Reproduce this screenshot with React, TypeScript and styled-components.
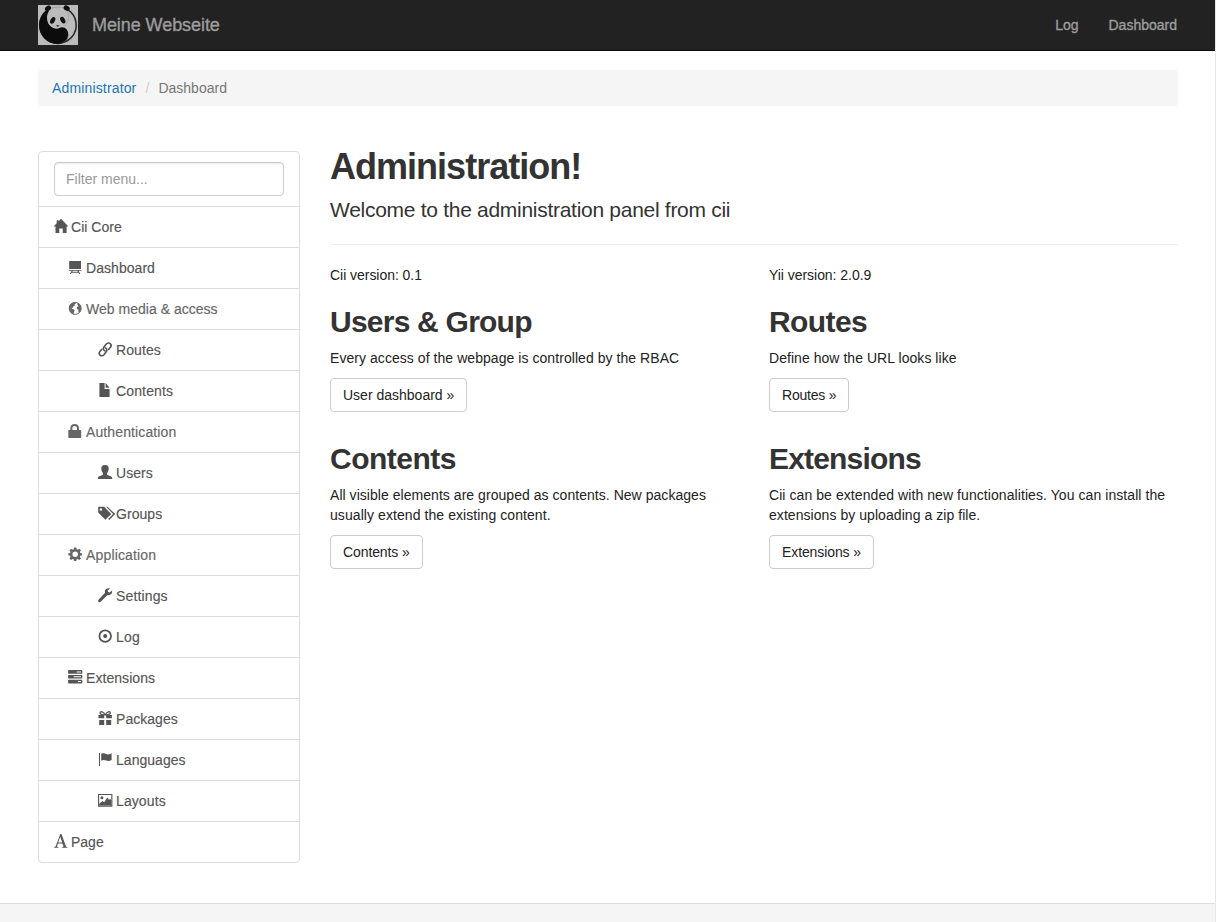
import React from "react";
import styled, { createGlobalStyle } from "styled-components";

const GlobalStyle = createGlobalStyle`
  *, *::before, *::after { box-sizing: border-box; }
  html { background: #e7e7e7; }
  body {
    margin: 0;
    font-family: "Liberation Sans", Arial, sans-serif;
    font-size: 14px;
    line-height: 20px;
    color: #333;
  }
  a { color: inherit; text-decoration: none; }
`;

const Page = styled.div`
  display: flex;
  flex-direction: column;
  width: 1215px;
  height: 922px;
  overflow: hidden;
  background: #fff;
`;

const Navbar = styled.header`
  flex: none;
  height: 51px;
  background: #222;
  border-bottom: 1px solid #080808;
  padding: 0 38px;
  display: flex;
  align-items: center;
  justify-content: space-between;
  color: #9d9d9d;
`;

const Brand = styled.a`
  display: flex;
  align-items: center;
  gap: 14px;
  font-size: 18px;
  -webkit-text-stroke: 0.35px #9d9d9d;
`;

const NavLinks = styled.nav`
  display: flex;
  gap: 30px;
  -webkit-text-stroke: 0.35px #9d9d9d;
`;

const Tracked = styled.span<{ $ls?: number }>`
  letter-spacing: ${(p) => p.$ls ?? 0}px;
  white-space: nowrap;
`;

const Breadcrumb = styled.ol`
  flex: none;
  list-style: none;
  margin: 19px 37px 0 38px;
  padding: 0 14px;
  height: 36px;
  background: #f5f5f5;
  border-radius: 4px;
  display: flex;
  align-items: center;
  color: #777;
`;

const Slash = styled.li`
  width: 22px;
  text-align: center;
  color: #ccc;
`;

const CrumbLink = styled.li`
  color: #1c75b5;
  letter-spacing: 0.15px;
`;

const Body = styled.div`
  flex: 1;
  display: grid;
  grid-template-columns: 262px 848px;
  column-gap: 30px;
  align-items: start;
  padding: 40px 0 0 38px;
`;

const Sidebar = styled.ul`
  list-style: none;
  margin: 5px 0 0;
  padding: 0;
  border: 1px solid #ddd;
  border-radius: 4px;
`;

const FilterRow = styled.li`
  height: 54px;
  padding: 10px 15px;
`;

const FilterInput = styled.input`
  display: block;
  width: 100%;
  height: 34px;
  padding: 0 11px;
  border: 1px solid #ccc;
  border-radius: 4px;
  box-shadow: inset 0 1px 1px rgba(0, 0, 0, 0.075);
  font: inherit;
  background: #fff;
  &::placeholder { color: #999; opacity: 1; }
`;

const MenuRow = styled.li<{ $level: number; $category?: boolean }>`
  height: 41px;
  border-top: 1px solid #ddd;
  padding-left: ${(p) => [15, 29, 59][p.$level]}px;
  display: flex;
  align-items: center;
  gap: ${(p) => (p.$level === 0 ? 3 : 4)}px;
  color: ${(p) => (p.$category ? "#666" : "#555")};
  -webkit-text-stroke: 0.15px currentColor;
`;

const Glyph = styled.svg`
  flex: none;
  width: 14px;
  height: 14px;
  overflow: visible;
  fill: currentColor;
`;

const Main = styled.main`
  display: flex;
  flex-direction: column;
`;

const Title = styled.h1`
  margin: 1px 0 0;
  font-size: 36px;
  line-height: 40px;
  font-weight: 700;
  letter-spacing: -0.98px;
`;

const Lead = styled.p`
  margin: 8px 0 0;
  padding-bottom: 20px;
  font-size: 21px;
  line-height: 29px;
  letter-spacing: -0.285px;
  border-bottom: 1px solid #eee;
`;

const Columns = styled.div`
  display: grid;
  grid-template-columns: 409px 409px;
  column-gap: 30px;
  row-gap: 30px;
  padding-top: 20px;
`;

const Text = styled.p`
  margin: 0 0 10px;
  color: #222;
`;

const Version = styled.p`
  margin: 0;
  color: #222;
  letter-spacing: -0.04px;
`;

const SectionTitle = styled.h2<{ $ls: number }>`
  margin: 0 0 10px;
  font-size: 30px;
  line-height: 33px;
  font-weight: 700;
  letter-spacing: ${(p) => p.$ls}px;
`;

const Button = styled.a<{ $ls: number }>`
  display: inline-flex;
  align-items: center;
  height: 34px;
  padding: 0 12px;
  border: 1px solid #ccc;
  border-radius: 4px;
  color: #222;
  letter-spacing: ${(p) => p.$ls}px;
`;

const Footer = styled.footer`
  flex: none;
  height: 19px;
  background: #f5f5f5;
  border-top: 1px solid #ddd;
`;

const Logo = () => (
  <svg width="40" height="40" viewBox="0 0 40 40">
    <rect width="40" height="40" fill="#bcbcbc" />
    <path d="M30.500 5.200A18.300 18.300 0 1 1 8.500 5.800" fill="none" stroke="#222" strokeWidth="1.500" />
    <path d="M11 4.500C16 1.300 24 1.200 28.500 4.200" fill="none" stroke="#999" strokeWidth="0.800" />
    <path d="M8.500 5.500C4 9 1.200 14 1.400 21 1.900 32 10 39 20 38.700 26 38.300 30 34 30.200 29.500 30.300 25 27.500 22.300 24.500 22.200 21.500 22.200 20.500 24.300 17.200 23.500 12 22.300 9 18 9 13 9 10 9.700 8 11 6Z" fill="#0c0c0c" />
    <path d="M30.200 29C30 33.500 27 37 22 38.400 29.500 37.500 34.500 33.500 36.800 28.500 34 32 31.500 34.500 28.500 35.800 30 33.500 30.500 31.500 30.200 29Z" fill="#333" />
    <ellipse cx="10" cy="3.400" rx="3.200" ry="2.500" transform="rotate(-30 10 3.400)" fill="#111" />
    <ellipse cx="28.700" cy="3.200" rx="3.200" ry="2.500" transform="rotate(30 28.700 3.200)" fill="#111" />
    <path d="M29.500 6C31.500 11 30.500 17 26.500 21" fill="none" stroke="#a0a0a0" strokeWidth="0.800" />
    <ellipse cx="14.700" cy="15.300" rx="2.200" ry="3.600" transform="rotate(30 14.700 15.300)" fill="#111" />
    <ellipse cx="24.800" cy="15.100" rx="2.200" ry="3.600" transform="rotate(-30 24.800 15.100)" fill="#111" />
    <path d="M17.800 20.300Q19.700 19.500 21.600 20.300L19.700 21.900Z" fill="#444" />
  </svg>
);

const icons: Record<string, React.ReactNode> = {
  home: <path d="M7-1.300 14.400 6.500H12.600V13H8.700V8.500H5.300V13H1.500V6.500H-.4L2.700 3.300V.3H4.700V1.200Z" />,
  board: (
    <path d="M1.200 0H13V8H1.200ZM.8 9H13.400V9.700H.8ZM3.700 9.700H4.800L4.300 10.700H9.900L9.400 9.700H10.500L12.400 13H11.200L10.500 11.700H3.700L3 13H1.800Z" />
  ),
  globe: (
    <>
      <circle cx="7.200" cy="6.400" r="6" fill="none" stroke="currentColor" strokeWidth="1" />
      <path d="M1.200 6.500C.8 3 3.500.4 7.200.5L8 1.700 6.600 2.400 6.900 3.600 5.300 4.600 5 5.800 3.600 5.500 3.900 6.800 5.600 7.300 6.600 8.600 5.900 10.300 5.700 12.200C3 11.500 1.300 9.300 1.200 6.500ZM9.400.8C12 1.900 13.300 4 13.200 6.500 13.100 8.400 12.200 10 11 11L10.300 9.200 10.500 7.800 8.800 7 8.900 5 10.600 4.200 9.500 2.900Z" />
    </>
  ),
  link: (
    <g fill="none" stroke="currentColor" strokeWidth="1.600" strokeLinecap="butt">
      <path d="M7.600 8.300C5.400 7.500 4.600 5.600 5.900 4.100L8.300 1.100C9.500-.4 11.300-.2 12.300.7 13.300 1.700 13.400 3.100 12.400 4.300L10.200 6.900" />
      <path d="M6.600 4.500C8.800 5.300 9.600 7.100 8.400 8.600L6 11.700C4.800 13.100 3 13.100 2 12.100 1 11.200.9 9.800 1.900 8.600L4.100 6" />
    </g>
  ),
  file: <path d="M1.400-.9H6.600V4.900H11.600V12.900H1.400ZM7.600-.9 11.600 3.800H7.600Z" />,
  lock: (
    <path
      fillRule="evenodd"
      d="M2.400 5V3C2.400.4 4.200-.9 6.700-.9S11 .4 11 3V5H12.500Q13.200 5 13.200 5.700V12.200Q13.200 13 12.400 13H1.100Q.3 13 .3 12.200V5.700Q.3 5 1 5ZM4.400 5H9V2.800Q9 .9 6.700.9T4.400 2.800Z"
    />
  ),
  user: (
    <path d="M7-1C9.700-1 10.900.6 10.700 3 10.600 5 9.800 6.300 9 7.100V8.400C9.700 9.500 14.200 9.800 14.200 12V12.900H-.1V12C-.1 9.800 4.300 9.500 5 8.400V7.100C4.200 6.300 3.400 5 3.300 3 3.200.6 4.300-1 7-1Z" />
  ),
  tags: (
    <>
      <path fillRule="evenodd" d="M.2-.2H6.200L13.200 6.900 7.400 12.700.2 5.500ZM2.900 1.300A1.250 1.250 0 1 0 2.900 3.800 1.250 1.250 0 1 0 2.900 1.300Z" />
      <path d="M8.100-.2H9.500L17.200 6.900 11.200 12.900 10.200 11.900 15.100 6.900Z" />
    </>
  ),
  cog: (
    <path
      fillRule="evenodd"
      d="M6-.6H8.300L8.700 1.300 9.700 1.700 11.400.7 12.900 2.200 11.900 3.900 12.300 4.900 14 5.200V7.300L12.300 7.700 11.900 8.700 12.900 10.400 11.400 11.900 9.700 10.900 8.700 11.300 8.300 13H6L5.700 11.300 4.700 10.900 3 11.900 1.500 10.400 2.500 8.700 2.100 7.700.3 7.300V5.200L2.100 4.900 2.500 3.900 1.500 2.200 3 .7 4.700 1.700 5.700 1.300ZM7.200 3.500A2.750 2.750 0 1 0 7.200 9 2.750 2.750 0 1 0 7.200 3.500Z"
    />
  ),
  wrench: (
    <path d="M14 1.500 11.800 3.500 10.100 3.100 9.700 1.500 12-.6C10-1.300 7.900-.6 7.100 1.100 6.700 2 6.800 3 7 3.800L.7 10.600C0 11.400 0 12.300.6 12.900 1.200 13.400 2 13.300 2.700 12.700L9.300 6.200C11 6.600 12.600 6 13.600 4.600 14.200 3.700 14.300 2.500 14 1.500Z" />
  ),
  record: (
    <>
      <circle cx="7.200" cy="6.100" r="5.800" fill="none" stroke="currentColor" strokeWidth="1.800" />
      <circle cx="7.200" cy="6.100" r="2.050" />
    </>
  ),
  tasks: (
    <path
      fillRule="evenodd"
      d="M.7-.9H13.700Q14.300-.9 14.300-.3V2.200Q14.300 2.800 13.700 2.800H.7Q.1 2.800.1 2.200V-.3Q.1-.9.7-.9ZM8.700.4V1.500H13V.4ZM.7 3.900H13.700Q14.300 3.900 14.300 4.500V7Q14.300 7.600 13.700 7.600H.7Q.1 7.600.1 7V4.500Q.1 3.900.7 3.900ZM5.700 5.200V6.300H13V5.200ZM.7 8.700H13.700Q14.300 8.700 14.300 9.300V11.800Q14.300 12.400 13.700 12.400H.7Q.1 12.400.1 11.800V9.300Q.1 8.700.7 8.700ZM9.900 10V11.100H13V10Z"
    />
  ),
  gift: (
    <>
      <path d="M.5 3H6.200V6.300H.5ZM8.200 3H13.900V6.300H8.200ZM1.200 8.100H6.200V12.900H1.200ZM8.200 8.100H13.200V12.900H8.200Z" />
      <path d="M6.900 2.800C5.800-.5 2.200-1.100 2 1 1.900 2.300 4 3 6.900 2.800ZM7.500 2.800C8.600-.5 12.200-1.100 12.400 1 12.500 2.300 10.400 3 7.500 2.800Z" fill="none" stroke="currentColor" strokeWidth="1.300" />
    </>
  ),
  flag: (
    <path d="M1 0H2V12.900H1ZM3.200.8C5 0 6.600.3 8.200 1.100 9.700 1.800 11.400 1.500 13.600.3V6.900C11.600 8.100 9.700 8.200 8.200 7.500 6.600 6.700 5 6.700 3.200 7.500Z" />
  ),
  picture: (
    <>
      <path fillRule="evenodd" d="M0-.1H14.400V12.700H0ZM1.100 1V11.600H13.300V1Z" />
      <circle cx="3.900" cy="3.700" r="1.500" />
      <path d="M1.200 11.600V9.800L4.500 7 6.200 8.300 9.300 3.500 11 5.800 12.100 4.900 13.300 6.200V11.600Z" />
    </>
  ),
  font: (
    <path
      fillRule="evenodd"
      d="M6.300-1H7.400L11.800 11.100Q12.100 12 13.400 12.200V12.800H8V12.200Q9.800 12.100 9.400 11L8.500 8.400H4L3.100 10.900Q2.800 12 4.500 12.200V12.800H.1V12.200Q1.400 12 1.800 11ZM4.200 7.600H8.200L6.200 1.800Z"
    />
  ),
};

const menu = [
  { icon: "home", label: "Cii Core", level: 0, ls: 0.03 },
  { icon: "board", label: "Dashboard", level: 1, ls: 0.05 },
  { icon: "globe", label: "Web media & access", level: 1, category: true, ls: 0.02 },
  { icon: "link", label: "Routes", level: 2, ls: 0.08 },
  { icon: "file", label: "Contents", level: 2, ls: 0.14 },
  { icon: "lock", label: "Authentication", level: 1, category: true, ls: 0.12 },
  { icon: "user", label: "Users", level: 2, ls: 0.05 },
  { icon: "tags", label: "Groups", level: 2, ls: 0.05 },
  { icon: "cog", label: "Application", level: 1, category: true, ls: 0.16 },
  { icon: "wrench", label: "Settings", level: 2, ls: 0.14 },
  { icon: "record", label: "Log", level: 2, ls: 0.2 },
  { icon: "tasks", label: "Extensions", level: 1, ls: 0.06 },
  { icon: "gift", label: "Packages", level: 2, ls: 0.04 },
  { icon: "flag", label: "Languages", level: 2, ls: 0.03 },
  { icon: "picture", label: "Layouts", level: 2, ls: 0.1 },
  { icon: "font", label: "Page", level: 0, ls: 0 },
];

const sections = [
  {
    title: "Users & Group",
    titleLs: -0.77,
    lines: [{ text: "Every access of the webpage is controlled by the RBAC", ls: 0.055 }],
    button: "User dashboard »",
    buttonLs: 0,
  },
  {
    title: "Routes",
    titleLs: -0.6,
    lines: [{ text: "Define how the URL looks like", ls: 0.045 }],
    button: "Routes »",
    buttonLs: -0.22,
  },
  {
    title: "Contents",
    titleLs: -0.5,
    lines: [
      { text: "All visible elements are grouped as contents. New packages", ls: 0.042 },
      { text: "usually extend the existing content.", ls: 0.075 },
    ],
    button: "Contents »",
    buttonLs: -0.1,
  },
  {
    title: "Extensions",
    titleLs: -0.82,
    lines: [
      { text: "Cii can be extended with new functionalities. You can install the", ls: 0.072 },
      { text: "extensions by uploading a zip file.", ls: 0.055 },
    ],
    button: "Extensions »",
    buttonLs: -0.1,
  },
];

export default function App() {
  return (
    <>
      <GlobalStyle />
      <Page>
        <Navbar>
          <Brand href="#">
            <Logo />
            <Tracked $ls={-0.07}>Meine Webseite</Tracked>
          </Brand>
          <NavLinks>
            <a href="#">Log</a>
            <a href="#">Dashboard</a>
          </NavLinks>
        </Navbar>
        <Breadcrumb>
          <CrumbLink><a href="#">Administrator</a></CrumbLink>
          <Slash>/</Slash>
          <li>Dashboard</li>
        </Breadcrumb>
        <Body>
          <Sidebar>
            <FilterRow>
              <FilterInput placeholder="Filter menu..." />
            </FilterRow>
            {menu.map((m) => (
              <MenuRow key={m.label} $level={m.level} $category={m.category}>
                <Glyph viewBox="0 0 14 14">{icons[m.icon]}</Glyph>
                <Tracked $ls={m.ls}>{m.label}</Tracked>
              </MenuRow>
            ))}
          </Sidebar>
          <Main>
            <Title>Administration!</Title>
            <Lead>Welcome to the administration panel from cii</Lead>
            <Columns>
              <Version>Cii version: 0.1</Version>
              <Version>Yii version: 2.0.9</Version>
            </Columns>
            <Columns>
              {sections.map((s) => (
                <section key={s.title}>
                  <SectionTitle $ls={s.titleLs}>{s.title}</SectionTitle>
                  <Text>
                    {s.lines.map((l, i) => (
                      <React.Fragment key={l.text}>
                        {i > 0 && <br />}
                        <Tracked $ls={l.ls}>{l.text}</Tracked>
                      </React.Fragment>
                    ))}
                  </Text>
                  <Button href="#" $ls={s.buttonLs}>{s.button}</Button>
                </section>
              ))}
            </Columns>
          </Main>
        </Body>
        <Footer />
      </Page>
    </>
  );
}
